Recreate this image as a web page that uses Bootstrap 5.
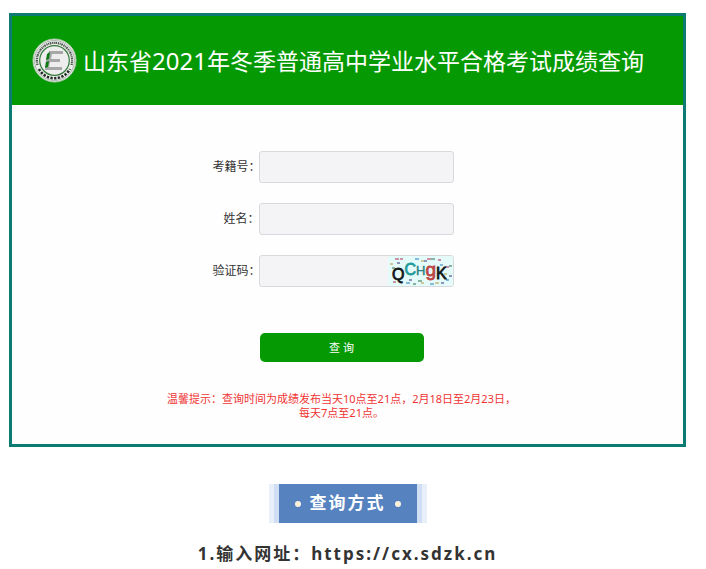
<!DOCTYPE html>
<html lang="zh-CN">
<head>
<meta charset="utf-8">
<meta name="viewport" content="width=device-width, initial-scale=1">
<title>成绩查询</title>
<link href="https://cdn.jsdelivr.net/npm/bootstrap@5.3.0/dist/css/bootstrap.min.css" rel="stylesheet">
<style>
body{font-family:"Noto Sans","Noto Sans CJK SC",sans-serif;color:#333}
.page{padding:13px 20px 0 9px}
.panel{border:3px solid #0b7b74}
.panel-top{background:#059a03;padding:20px;min-height:89px;gap:6px}
.panel-top h1{font-size:23px;line-height:32px;font-weight:400;color:#fff}
.digits{font-size:24px}
.seal{width:45px;height:45px}
.query{padding:46px 32px 24px 20px;background:#fefefe}
.fields{width:258px;gap:20px}
.field-row{gap:5px}
.field-row label{width:41px;font-size:12px;line-height:18px;color:#333;font-feature-settings:"halt"}
.box{width:195px}
.box input{height:32px;background:#f4f3f5;border:1px solid #d9d8dc;border-radius:3px;font-size:12px}
.captcha{right:1px;top:1px;width:65px;height:30px}
.go{width:164px;height:29px;margin-top:46px;background:#059a03;border-radius:5px;font-size:11px;line-height:16px}
.go:hover{background:#048502}
.tip{margin-top:30px;max-width:350px;font-size:11px;line-height:14px;color:#f03434}
.section-tag{background:#5682c0;border:solid #d0def3;border-width:0 5px;padding:0 16px;gap:9px;height:39px;color:#fff;font-size:17px;letter-spacing:2px}
.tag-edge{margin-top:37px;border:solid #e9effa;border-width:0 5px}
.dot{width:6px;height:6px;background:#fdf0dc}
.step{margin-top:16px;font-size:17px;line-height:30px;letter-spacing:2px}
</style>
<script src="https://cdn.jsdelivr.net/npm/bootstrap@5.3.0/dist/js/bootstrap.bundle.min.js"></script>
</head>
<body>
<main class="page">
  <section class="panel">
    <header class="panel-top d-flex align-items-center">
      <svg class="seal flex-shrink-0" viewBox="0 0 45 45" aria-hidden="true">
        <circle cx="22.500" cy="22.500" r="21.500" fill="#e9efe9" stroke="#b5c9b5"/>
        <circle cx="22.500" cy="22.500" r="20" fill="none" stroke="#a0a8a0" stroke-width=".8"/>
        <path d="M5.500 27A17.600 17.600 0 1 1 39.500 27" fill="none" stroke="#4d524e" stroke-width="2.200" stroke-dasharray="1.300 .7 .9 .6 1.600 .8"/>
        <path d="M7 31A17.600 17.600 0 0 0 38 31" fill="none" stroke="#252a27" stroke-width="2.600" stroke-dasharray="2.300 1.400"/>
        <circle cx="22.500" cy="22.500" r="14.800" fill="#ededed" stroke="#34783a" stroke-width="1.200"/>
        <path d="M17 13H31V16H20L19 21H28V24H18L17 29H30V32H13L14 22Z" fill="#a7a7a7"/>
        <path d="M15 16L18 14L17 21L14 22ZM14 24L17 23L16 29L13 30Z" fill="#087b12"/>
      </svg>
      <h1 class="mb-0">山东省<span class="digits">2021</span>年冬季普通高中学业水平合格考试成绩查询</h1>
    </header>
    <form class="query d-flex flex-column align-items-center">
      <div class="fields d-flex flex-column">
        <div class="field-row d-flex align-items-center">
          <label class="text-end text-nowrap" for="exam-no">考籍号：</label>
          <div class="box"><input class="form-control shadow-none" id="exam-no" type="text"></div>
        </div>
        <div class="field-row d-flex align-items-center">
          <label class="text-end text-nowrap" for="full-name">姓名：</label>
          <div class="box"><input class="form-control shadow-none" id="full-name" type="text"></div>
        </div>
        <div class="field-row d-flex align-items-center">
          <label class="text-end text-nowrap" for="code">验证码：</label>
          <div class="box position-relative">
            <input class="form-control shadow-none" id="code" type="text">
            <svg class="captcha position-absolute" viewBox="0 0 65 30" role="img" aria-label="验证码图片">
              <rect width="65" height="30" rx="2" fill="#e4fbfa"/>
              <g fill="none" stroke-width="1">
                <path d="M7 3h4M12 3h3M39 3h4M50 4h3M5 26h3M57 11h4" stroke="#b42a55"/>
                <path d="M27 3h4M18 27h4M42 28h4M58 24h3M52 9h3" stroke="#2878b8"/>
                <path d="M2 8h3M33 27h3M47 27h4M33 5h3M56 18h3" stroke="#ba963b"/>
                <path d="M4 12h3M30 25h4M43 3h4M61 10h3M25 28h3" stroke="#2d6a48"/>
                <path d="M9 7h3M21 24h3M36 5h3M53 27h3M61 20h3" stroke="#33317c"/>
              </g>
              <text x="4" y="24" font-family="Liberation Sans, sans-serif" font-size="16" fill="#101719" stroke="#101719" stroke-width=".8">Q<tspan dy="-5" fill="#239a9b" stroke="#239a9b">C</tspan><tspan font-size="13" fill="#287f83" stroke="#287f83" stroke-width=".4">H</tspan><tspan dy="1" font-size="19" fill="#bd4445" stroke="#bd4445">g</tspan><tspan dy="3" font-size="16">K</tspan></text>
            </svg>
          </div>
        </div>
      </div>
      <button class="go btn text-white border-0 p-0" type="button">查 询</button>
      <p class="tip text-center mb-0">温馨提示：查询时间为成绩发布当天10点至21点，2月18日至2月23日，每天7点至21点。</p>
    </form>
  </section>
  <section class="d-flex flex-column align-items-center">
    <div class="tag-edge"><h2 class="section-tag d-flex align-items-center fw-bold mb-0"><span class="dot rounded-circle"></span><span>查询方式</span><span class="dot rounded-circle"></span></h2></div>
    <p class="step fw-bold mb-0 text-center">1.输入网址：https://cx.sdzk.cn</p>
  </section>
</main>
</body>
</html>
